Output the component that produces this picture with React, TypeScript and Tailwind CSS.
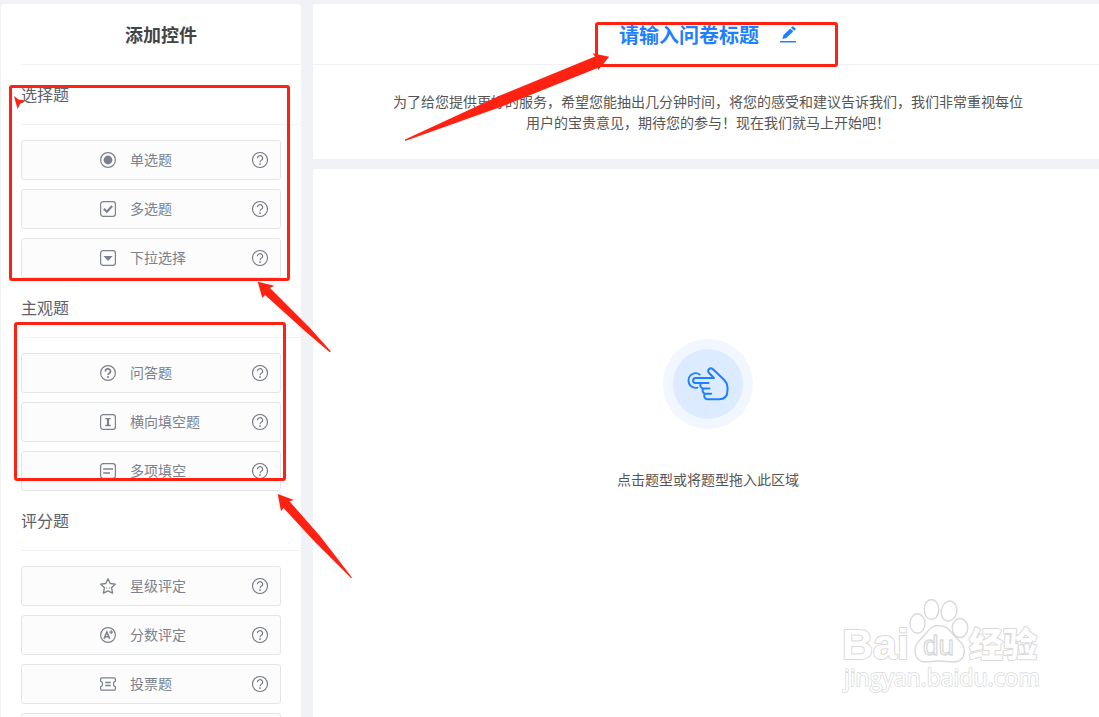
import { useState } from 'react';

type IconName = 'radio' | 'check' | 'select' | 'question' | 'blank' | 'multi' | 'star' | 'score' | 'vote';

interface Control {
  id: string;
  name: string;
  icon?: IconName;
}

interface Group {
  title: string;
  controls: Control[];
}

const groups: Group[] = [
  {
    title: '选择题',
    controls: [
      { id: 'radio', name: '单选题', icon: 'radio' },
      { id: 'checkbox', name: '多选题', icon: 'check' },
      { id: 'select', name: '下拉选择', icon: 'select' },
    ],
  },
  {
    title: '主观题',
    controls: [
      { id: 'text', name: '问答题', icon: 'question' },
      { id: 'blank', name: '横向填空题', icon: 'blank' },
      { id: 'multi', name: '多项填空', icon: 'multi' },
    ],
  },
  {
    title: '评分题',
    controls: [
      { id: 'star', name: '星级评定', icon: 'star' },
      { id: 'score', name: '分数评定', icon: 'score' },
      { id: 'vote', name: '投票题', icon: 'vote' },
      { id: 'more', name: '' },
    ],
  },
];

function ControlIcon({ name }: { name: IconName }) {
  const box = <rect x="0.6" y="0.6" width="14.8" height="14.8" rx="2.6" />;
  const ring = <circle cx="8" cy="8" r="7.4" />;
  return (
    <svg viewBox="0 0 16 16" className="size-4 shrink-0 overflow-visible" fill="none" stroke="currentColor" strokeWidth="1.2">
      {name === 'radio' && <>{ring}<circle cx="8" cy="8" r="4.4" fill="currentColor" stroke="none" /></>}
      {name === 'check' && <>{box}<path d="M3.8 7.8l3 2.9 5.4-5.8" strokeWidth="2.2" /></>}
      {name === 'select' && <>{box}<path d="M3.5 6h9.2L8.1 11z" fill="currentColor" stroke="none" /></>}
      {name === 'question' && (
        <>
          {ring}
          <path d="M5.5 6.5a2.5 2.4 0 1 1 3.9 1.7C8.5 8.8 8 9.1 8 10" strokeWidth="1.7" />
          <circle cx="8" cy="12" r="1.1" fill="currentColor" stroke="none" />
        </>
      )}
      {name === 'blank' && <>{box}<path d="M5.3 4.7h5.4M5.3 11.5h5.4" strokeWidth="1.3" /><path d="M8 4.5v7" strokeWidth="2.2" /></>}
      {name === 'multi' && <>{box}<path d="M3.2 6h9.8M3.2 10h6.8" strokeWidth="1.6" /></>}
      {name === 'star' && (
        <>
          <path d="M8 .7l2.2 4.8 5.2.6-3.9 3.6 1.1 5.4L8 12.9l-4.6 2.2 1.1-5.4L.6 6.1l5.2-.6z" strokeWidth="1.3" strokeLinejoin="round" />
          <path d="M6 10h1.2M8.9 10h1.2" strokeWidth="1.2" />
        </>
      )}
      {name === 'score' && (
        <>
          {ring}
          <path d="M4 11.9L6.9 5l2.9 6.9M5.2 9.7h3.5" strokeWidth="1.5" />
          <path d="M11.2 3.2V7M9.3 5.1h3.8" strokeWidth="1.2" />
        </>
      )}
      {name === 'vote' && (
        <>
          <path d="M1.8 1.9h12.4q1.2 0 1.2 1.2v2c-2.6.7-2.6 5.2 0 5.9v2q0 1.2-1.2 1.2H1.8Q.6 14.2.6 13v-2c2.6-.7 2.6-5.2 0-5.9v-2Q.6 1.9 1.8 1.9z" strokeWidth="1.3" />
          <path d="M5.2 6.5h5.6M5.2 9.5h5.6" strokeWidth="1.3" />
        </>
      )}
    </svg>
  );
}

function HelpIcon() {
  return (
    <svg viewBox="0 0 16 16" className="size-4 overflow-visible" fill="none" stroke="currentColor" strokeWidth="1.1">
      <circle cx="8" cy="8" r="7.5" />
      <path d="M5.4 6.2a2.6 2.4 0 1 1 4 1.9C8.4 8.8 8 9.2 8 10.3" />
      <circle cx="8" cy="12.1" r="0.9" fill="currentColor" stroke="none" />
    </svg>
  );
}

function ControlItem({ control, active, onSelect }: { control: Control; active: boolean; onSelect: (id: string) => void }) {
  if (!control.icon) return <li className="h-10 rounded-[3px] border border-[#e4e5e7] bg-[#fcfcfc]" />;
  return (
    <li className="flex h-10 items-center rounded-[3px] border border-[#e4e5e7] bg-[#fcfcfc] pr-3 text-[#7b828e]">
      <button type="button" aria-pressed={active} onClick={() => onSelect(control.id)} className="flex h-full flex-1 items-center gap-3.5 pl-[78px] text-sm">
        <ControlIcon name={control.icon} />
        <span className="pb-0.5">{control.name}</span>
      </button>
      <button type="button" aria-label={`${control.name}说明`} className="text-[#70757e]">
        <HelpIcon />
      </button>
    </li>
  );
}

function Sidebar() {
  const [selected, setSelected] = useState('');

  return (
    <aside className="w-[300px] shrink-0 overflow-hidden rounded-t bg-white pl-5">
      <h2 className="flex h-[61px] items-center justify-center border-b border-[#f1f2f5] text-lg font-bold text-[#444]">添加控件</h2>
      {groups.map((group) => (
        <section key={group.title}>
          <h3 className="flex h-15 items-center border-b border-[#f1f2f5] pb-0.5 text-base text-[#5c6069]">{group.title}</h3>
          <ul className="flex flex-col gap-[9px] pt-[15px] pr-5">
            {group.controls.map((control) => (
              <ControlItem key={control.id} control={control} active={selected === control.id} onSelect={setSelected} />
            ))}
          </ul>
        </section>
      ))}
    </aside>
  );
}

function TapIcon() {
  return (
    <svg viewBox="0 0 42 34" className="h-[34px] w-[42px]" fill="none" stroke="#1f80ff" strokeWidth="2" strokeLinecap="round" strokeLinejoin="round">
      <path d="M27 11H8.6a2.5 2.5 0 0 0 0 5H21.500M14 16c-1.4 2.4-.6 5.4 2.5 5.4h6M16 21.4c-1 2.4 0 5.4 2.7 5.4h5.5M17.6 26.8c-.8 2.6-.2 5.4 2.6 5.4H32c5.500 0 8.500-3.500 8.500-9v-3c0-3-1.200-5-3.200-7.200L26 2.200c-3-2.600-6 .8-4.200 3.600L27 11" />
      <path d="M12.8 7.6C8.5 4.2 1.5 7.4 1.5 13.5c0 4.800 4 8.200 9 7.200" strokeWidth="1.8" />
    </svg>
  );
}

function Editor() {
  return (
    <main className="-mr-1 flex min-w-0 flex-1 flex-col gap-2.5">
      <header className="rounded-t bg-white pb-[26px]">
        <div className="flex h-[61px] items-center justify-center gap-5 border-b border-[#f1f2f5] pt-0.5">
          <h1 className="text-xl font-bold text-[#1f80ff]">请输入问卷标题</h1>
          <button type="button" aria-label="编辑标题">
            <svg viewBox="0 0 18 18" className="size-[18px]" fill="#1f80ff">
              <path d="M3.4 12.9l.9-3.7 6.900-6.700 3.100 3-7 6.600zM12 1.700l1.300-1.100q.7-.5 1.400.1l1.700 1.600q.6.700 0 1.400l-1.300 1.100z" />
              <path d="M1 15h16v1.500H1z" />
            </svg>
          </button>
        </div>
        <p className="mx-auto mt-[26px] max-w-[640px] text-center text-sm leading-[21px] text-[#555]">
          为了给您提供更好的服务，希望您能抽出几分钟时间，将您的感受和建议告诉我们，我们非常重视每位用户的宝贵意见，期待您的参与！现在我们就马上开始吧！
        </p>
      </header>
      <section className="flex flex-1 flex-col items-center rounded-t bg-white pt-[170px]">
        <div className="flex size-[90px] items-center justify-center rounded-full bg-[#f2f7ff]">
          <div className="flex size-[70px] items-center justify-center rounded-full bg-[#dcebff]">
            <TapIcon />
          </div>
        </div>
        <p className="mt-10 text-sm leading-[21px] text-[#555]">点击题型或将题型拖入此区域</p>
      </section>
    </main>
  );
}

// red boxes and arrows that point out the steps
function Annotations() {
  return (
    <svg viewBox="0 0 1099 717" width="1099" height="717" className="pointer-events-none absolute top-0 left-0 max-w-none" fill="#ff2213">
      <g fill="none" stroke="#ff2213" strokeWidth="3">
        <rect x="10.5" y="86.5" width="278" height="193" rx="1.5" />
        <rect x="15.5" y="323.5" width="269" height="156" rx="1.5" />
        <rect x="596.5" y="23.5" width="240" height="42" rx="1.5" />
      </g>
      <path d="M14 96l4.500 3.500 6.500 1-5 3.500-2.500 5z" />
      <path d="M257.700 281.700l16.600 4-4.300 2.300L310 328 331 351.500 329.500 352 306 332 265 295 262.300 298z" />
      <path d="M277.700 494l16.300 6-4.500 1.300L320 536 352 577.500 351 578 314 541 283.500 508 281 511.300z" />
      <path d="M609.200 56.700L592.500 53.300 595 56.500 500 95.500 405 139.500V141L502 106.500 597.500 68 598.300 70z" />
    </svg>
  );
}

function Watermark() {
  return (
    <svg viewBox="0 0 200 98" width="200" height="98" className="pointer-events-none absolute right-[58px] bottom-[22px] overflow-visible" fill="#fff" stroke="#d9d9d9" strokeWidth="2" strokeLinejoin="round">
      <g className="font-['Liberation_Sans','Noto_Sans_CJK_SC',sans-serif]" paintOrder="stroke">
        <text x="1" y="62" fontSize="43" fontWeight="700">Bai</text>
        <text x="128" y="60" fontSize="34" fontWeight="900">经验</text>
        <text x="3" y="89" fontSize="23" strokeWidth="1.5" className="font-['Open_Sans',sans-serif]">jingyan.baidu.com</text>
      </g>
      <g strokeWidth="1.4">
        <ellipse cx="76.5" cy="26.5" rx="7.5" ry="9.8" />
        <ellipse cx="90.5" cy="12.5" rx="7.3" ry="10" />
        <ellipse cx="108" cy="14" rx="7.8" ry="10" transform="rotate(12 108 14)" />
        <ellipse cx="119" cy="31" rx="7.8" ry="9.5" />
        <path d="M97.500 28.500c-7 0-10 5-14 9.500-5 5.500-10.500 9-9.500 17 1 7 5 10.500 12 10 5-.3 6-1 12-1s9 1 14 1c7 0 11-4 11.300-11 .2-7-6-10.500-11-16.500-4-5-7.500-9-14.800-9z" />
      </g>
      <text x="82" y="58" fontSize="28" strokeWidth="1.3" className="font-['Liberation_Sans',sans-serif]">du</text>
    </svg>
  );
}

export default function App() {
  return (
    <div className="relative flex h-screen gap-3 overflow-hidden bg-[#f1f2f6] pt-1 pl-px font-['Noto_Sans_CJK_SC',sans-serif]">
      <Sidebar />
      <Editor />
      <Watermark />
      <Annotations />
    </div>
  );
}
